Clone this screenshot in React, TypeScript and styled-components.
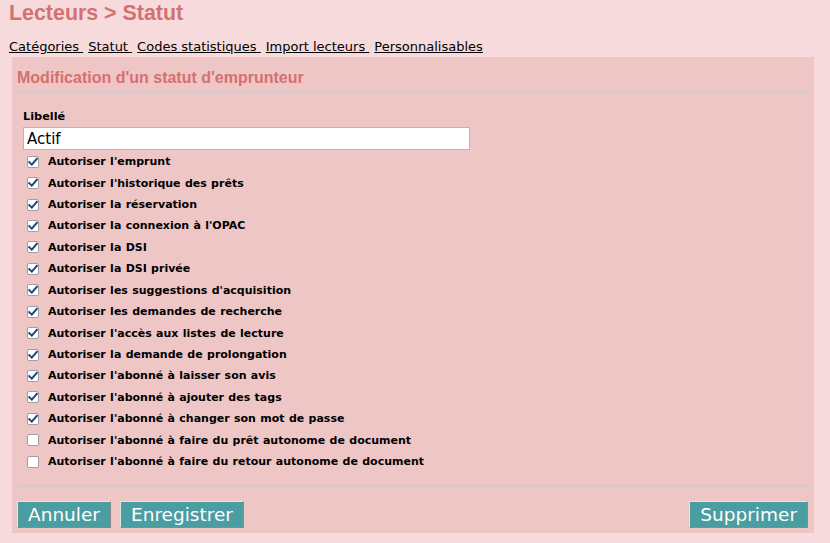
import React, { FC } from 'react';
import styled, { createGlobalStyle } from 'styled-components';

const GlobalStyle = createGlobalStyle`
  html, body {
    margin: 0;
    padding: 0;
    background: #f7dbdc;
  }
  body {
    font-family: "Liberation Sans", Arial, sans-serif;
    color: #000;
  }
`;

const Page = styled.div`
  width: 830px;
  height: 543px;
  padding: 1px 0 0 9px;
  box-sizing: border-box;
  overflow: hidden;
`;

const Title = styled.h1`
  margin: 0;
  font-family: "Liberation Sans", Arial, sans-serif;
  font-size: 21.4px;
  line-height: 24px;
  font-weight: bold;
  color: #d37170;
`;

const Tabs = styled.nav`
  display: flex;
  gap: 5px;
  margin-top: 14px;
  font-family: "DejaVu Sans", sans-serif;
  font-size: 13px;
  line-height: 15px;
`;

const Tab = styled.a`
  color: #000;
  text-decoration: underline;
  white-space: pre;
  cursor: pointer;
`;

const Panel = styled.section`
  width: 802px;
  margin: 3px 0 0 3px;
  padding: 12px 6px 5px 5px;
  box-sizing: border-box;
  background: #efc6c6;
`;

const Heading = styled.h2`
  margin: 0;
  padding-bottom: 4px;
  border-bottom: 2px solid #cfcdce;
  font-family: "Liberation Sans", Arial, sans-serif;
  font-size: 16px;
  line-height: 18px;
  font-weight: bold;
  color: #d37170;
`;

const Form = styled.div`
  padding: 17px 0 0 6px;
`;

const Label = styled.label`
  display: block;
  font-family: "DejaVu Sans", sans-serif;
  font-size: 11.3px;
  line-height: 14px;
  font-weight: bold;
`;

const TextInput = styled.input`
  display: block;
  width: 447px;
  height: 23px;
  margin-top: 3px;
  padding: 0 3px;
  box-sizing: border-box;
  border: 1px solid #a9bcc4;
  background: #fff;
  font-family: "DejaVu Sans", sans-serif;
  font-size: 15px;
  color: #000;
  outline: none;
`;

const Options = styled.div`
  display: flex;
  flex-direction: column;
  margin-top: 1px;
  padding-left: 4px;
`;

const Row = styled.label`
  display: flex;
  align-items: center;
  height: 21.43px;
  gap: 9px;
  font-family: "DejaVu Sans", sans-serif;
  font-size: 11px;
  font-weight: bold;
  word-spacing: 0.5px;
  cursor: pointer;
`;

const Box = styled.span`
  width: 12px;
  height: 12px;
  box-sizing: border-box;
  border: 1px solid #a0a0a0;
  border-radius: 2px;
  background: #fff;
  display: flex;
  align-items: center;
  justify-content: center;
  flex-shrink: 0;
`;

const Separator = styled.hr`
  margin: 13px 0 0;
  border: 0;
  border-top: 2px solid #cfcdce;
`;

const Actions = styled.div`
  display: flex;
  align-items: center;
  gap: 9px;
  margin-top: 14px;
`;

const Spacer = styled.div`
  flex: 1;
`;

const Button = styled.button`
  height: 27px;
  padding: 0 10px;
  border: 1px solid;
  border-color: #e4e4e4 #8a8a8a #8a8a8a #e4e4e4;
  background: #4a9da1;
  color: #fff;
  font-family: "DejaVu Sans", sans-serif;
  font-size: 18.5px;
  line-height: 25px;
  cursor: pointer;
`;

const Check: FC<{ checked: boolean }> = ({ checked }) => (
  <Box>
    {checked && (
      <svg width="10" height="10" viewBox="0 0 10 10">
        <path
          d="M1.3 5.2 L3.8 7.6 L8.8 1.8"
          fill="none"
          stroke="#17467d"
          strokeWidth="2"
          strokeLinecap="square"
        />
      </svg>
    )}
  </Box>
);

const tabs = [
  'Catégories\u00a0',
  'Statut\u00a0',
  'Codes statistiques\u00a0',
  'Import lecteurs\u00a0',
  'Personnalisables',
];

const options: [string, boolean][] = [
  ["Autoriser l'emprunt", true],
  ["Autoriser l'historique des prêts", true],
  ['Autoriser la réservation', true],
  ["Autoriser la connexion à l'OPAC", true],
  ['Autoriser la DSI', true],
  ['Autoriser la DSI privée', true],
  ["Autoriser les suggestions d'acquisition", true],
  ['Autoriser les demandes de recherche', true],
  ["Autoriser l'accès aux listes de lecture", true],
  ['Autoriser la demande de prolongation', true],
  ["Autoriser l'abonné à laisser son avis", true],
  ["Autoriser l'abonné à ajouter des tags", true],
  ["Autoriser l'abonné à changer son mot de passe", true],
  ["Autoriser l'abonné à faire du prêt autonome de document", false],
  ["Autoriser l'abonné à faire du retour autonome de document", false],
];

const App: FC = () => (
  <Page>
    <GlobalStyle />
    <Title>Lecteurs &gt; Statut</Title>
    <Tabs>
      {tabs.map(t => (
        <Tab key={t}>{t}</Tab>
      ))}
    </Tabs>
    <Panel>
      <Heading>Modification d'un statut d'emprunteur</Heading>
      <Form>
        <Label>Libellé</Label>
        <TextInput defaultValue="Actif" />
        <Options>
          {options.map(([text, checked]) => (
            <Row key={text}>
              <Check checked={checked} />
              {text}
            </Row>
          ))}
        </Options>
      </Form>
      <Separator />
      <Actions>
        <Button>Annuler</Button>
        <Button>Enregistrer</Button>
        <Spacer />
        <Button>Supprimer</Button>
      </Actions>
    </Panel>
  </Page>
);

export default App;
